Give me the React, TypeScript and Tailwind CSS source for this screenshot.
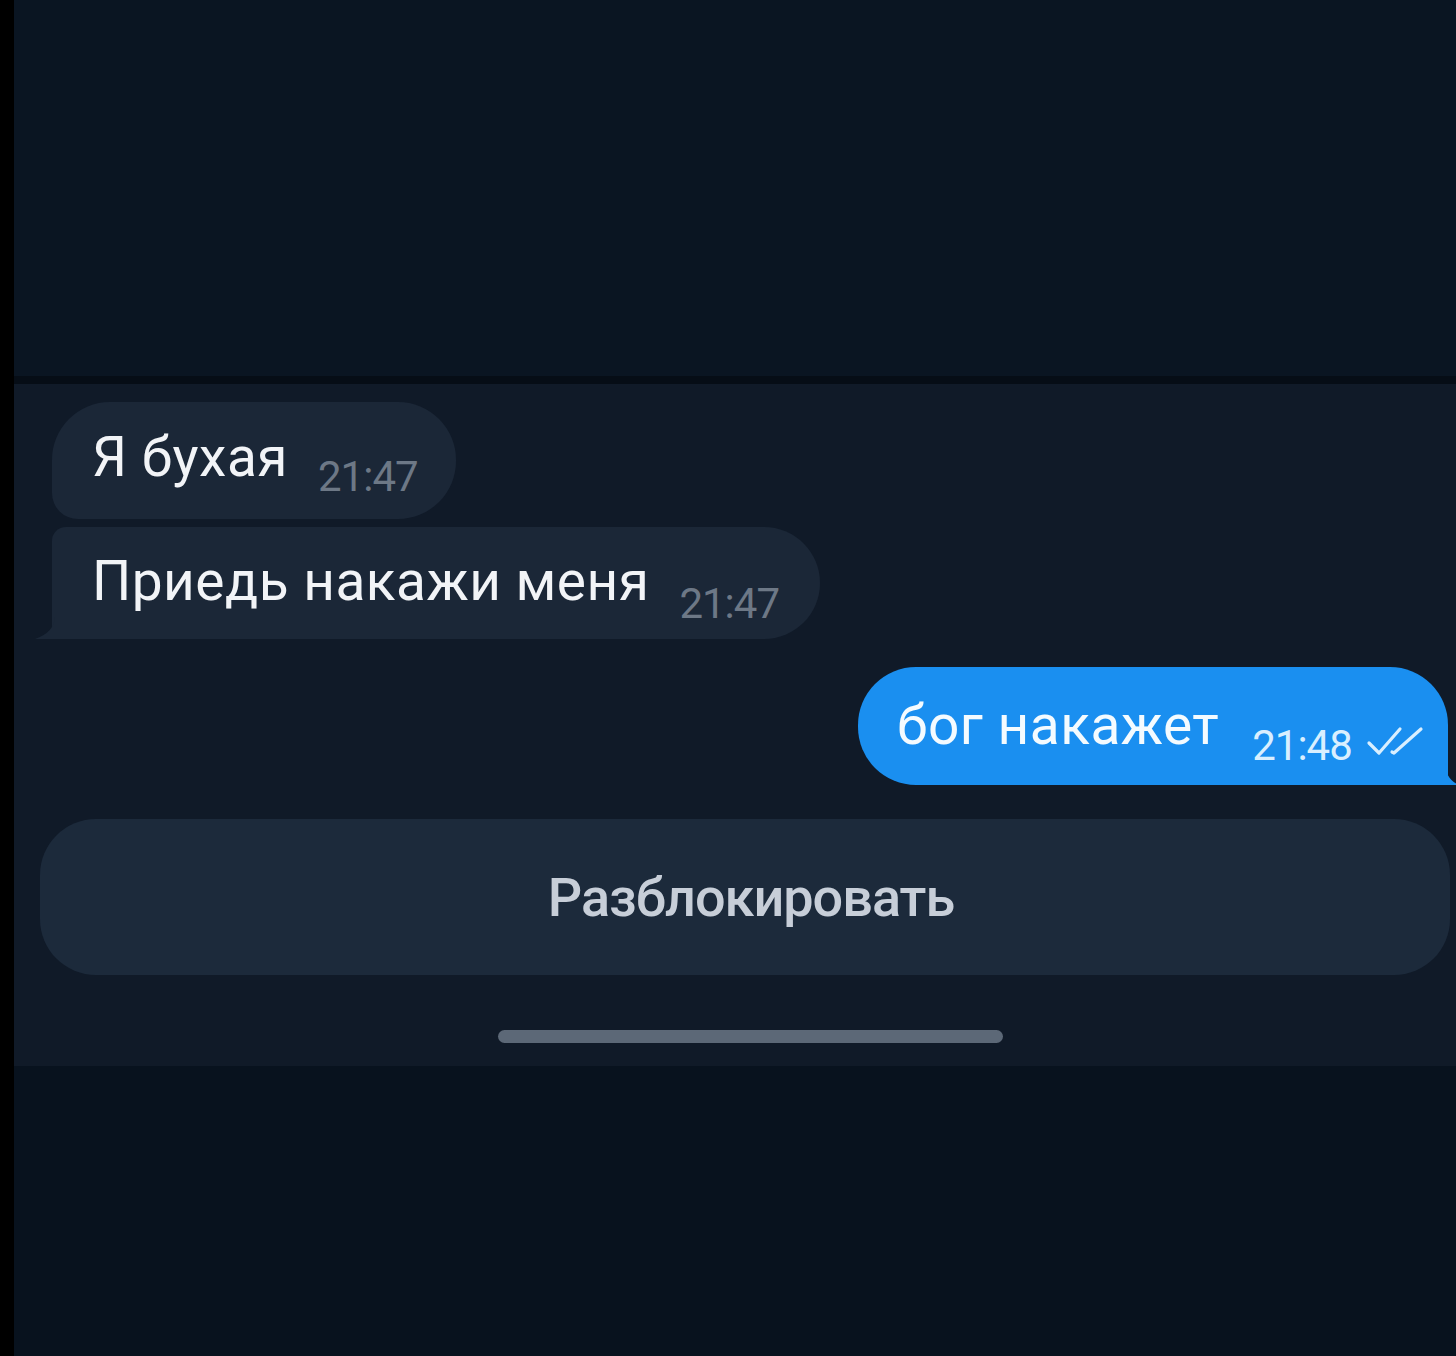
import React from 'react';

const font = { fontFamily: 'Roboto, "Noto Sans", sans-serif' };

function DoubleCheck() {
  return (
    <svg width="60" height="32" viewBox="0 0 60 32" fill="none" className="ml-[14px] mb-[10px]">
      <path d="M3 18 L13 28 L34 4" stroke="#d9efff" strokeWidth="3.2" strokeLinecap="round" strokeLinejoin="round" />
      <path d="M26 27 L28 28 L55 4" stroke="#d9efff" strokeWidth="3.2" strokeLinecap="round" strokeLinejoin="round" />
    </svg>
  );
}

function Tail({ side, color }: { side: 'left' | 'right'; color: string }) {
  if (side === 'left') {
    return (
      <svg width="20" height="22" viewBox="0 0 20 22" className="absolute bottom-0 -left-[17px]">
        <path d="M20 0 C20 10 12 18 0 22 L20 22 Z" fill={color} />
      </svg>
    );
  }
  return (
    <svg width="14" height="22" viewBox="0 0 14 22" className="absolute bottom-0 -right-[11px]">
      <path d="M0 0 C0 10 5 18 14 22 L0 22 Z" fill={color} />
    </svg>
  );
}

export default function App() {
  return (
    <div className="flex min-h-[1356px] w-full bg-[#08111c]" style={font}>
      <div className="w-[14px] shrink-0 bg-black" />
      <div className="flex flex-1 flex-col">
        <div className="h-[376px] bg-[#0a1522]" />
        <div className="h-[8px] bg-[#060d16]" />

        <div className="flex h-[682px] flex-col bg-[#101a28]">
          <div className="ml-[38px] mt-[18px] flex h-[117px] w-[404px] items-end rounded-[58px] rounded-bl-[26px] bg-[#1b2737] pl-[40px] pb-[21px]">
            <span className="mb-[13px] text-[55px] leading-none tracking-[0.5px] text-[#f2f4f7]">Я бухая</span>
            <span className="ml-[30px] text-[42px] leading-none tracking-[-1px] text-[#6d7886]">21:47</span>
          </div>

          <div className="relative ml-[38px] mt-[8px] flex h-[112px] w-[768px] items-end rounded-l-[14px] rounded-r-[56px] rounded-bl-none bg-[#1b2737] pl-[40px] pb-[14px]">
            <Tail side="left" color="#1b2737" />
            <span className="mb-[16px] text-[55px] leading-none tracking-[0.5px] text-[#f2f4f7]">Приедь накажи меня</span>
            <span className="ml-[30px] text-[42px] leading-none tracking-[-1px] text-[#6d7886]">21:47</span>
          </div>

          <div className="mt-[28px] flex justify-end pr-[8px]">
            <div className="relative flex h-[118px] w-[590px] items-end rounded-[58px] rounded-br-none bg-[#1a8ff0] pl-[39px] pb-[18px]">
              <Tail side="right" color="#1a8ff0" />
              <span className="mb-[14px] text-[55px] leading-none tracking-[0.5px] text-[#f4fbff]">бог накажет</span>
              <span className="ml-[33px] text-[42px] leading-none tracking-[-1px] text-[#d9efff]">21:48</span>
              <DoubleCheck />
            </div>
          </div>

          <div className="ml-[26px] mr-[6px] mt-[34px] flex h-[156px] items-center justify-center rounded-[56px] bg-[#1c2a3b] pl-[12px]">
            <span className="text-[54px] font-medium tracking-[-1px] text-[#c7ced8]">Разблокировать</span>
          </div>

          <div className="ml-[484px] mt-[55px] h-[13px] w-[505px] rounded-full bg-[#5c6877]" />
        </div>

        <div className="flex-1 bg-[#08121e]" />
      </div>
    </div>
  );
}
